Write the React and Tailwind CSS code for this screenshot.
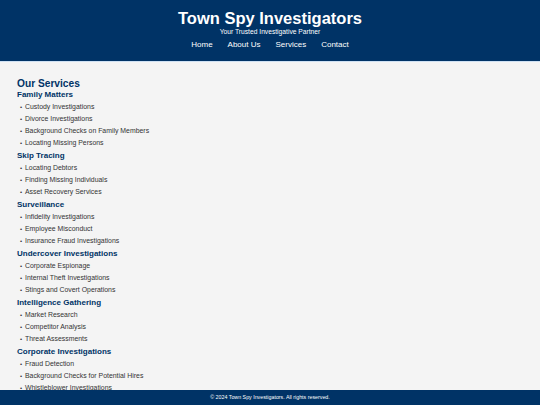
const services = [
  {
    title: "Family Matters",
    items: [
      "Custody Investigations",
      "Divorce Investigations",
      "Background Checks on Family Members",
      "Locating Missing Persons",
    ],
  },
  {
    title: "Skip Tracing",
    items: ["Locating Debtors", "Finding Missing Individuals", "Asset Recovery Services"],
  },
  {
    title: "Surveillance",
    items: ["Infidelity Investigations", "Employee Misconduct", "Insurance Fraud Investigations"],
  },
  {
    title: "Undercover Investigations",
    items: ["Corporate Espionage", "Internal Theft Investigations", "Stings and Covert Operations"],
  },
  {
    title: "Intelligence Gathering",
    items: ["Market Research", "Competitor Analysis", "Threat Assessments"],
  },
  {
    title: "Corporate Investigations",
    items: [
      "Fraud Detection",
      "Background Checks for Potential Hires",
      "Whistleblower Investigations",
    ],
  },
];

const App = () => {
  return (
    <div className="min-h-[405px] bg-[#f4f4f4] font-['Liberation_Sans',Arial,sans-serif]">
      <header className="bg-[#003366] text-white text-center h-[62px] border-b-[1.5px] border-[#cfe1f3] pt-[9px]">
        <h1 className="text-[16.5px] font-bold leading-[19px]">Town Spy Investigators</h1>
        <p className="text-[6.7px] leading-[8px]">Your Trusted Investigative Partner</p>
        <nav className="flex justify-center gap-[15px] text-[8px] leading-[10px] mt-[4px]">
          <a href="#">Home</a>
          <a href="#">About Us</a>
          <a href="#">Services</a>
          <a href="#">Contact</a>
        </nav>
      </header>

      <main className="px-[17px] pt-[16px] pb-[20px]">
        <h2 className="text-[10.2px] font-bold text-[#003366] leading-[12px]">Our Services</h2>
        {services.map((section) => (
          <section key={section.title}>
            <h3 className="text-[8px] font-bold text-[#003366] leading-[10px]">{section.title}</h3>
            <ul className="mt-[1px] mb-[2px]">
              {section.items.map((item) => (
                <li key={item} className="flex items-center h-[12px] text-[6.9px] text-[#333333]">
                  <span className="w-[8px] pl-[3px] text-[6px]">•</span>
                  {item}
                </li>
              ))}
            </ul>
          </section>
        ))}
      </main>

      <footer className="fixed bottom-0 left-0 right-0 h-[15px] bg-[#003366] text-white text-[5.3px] flex items-center justify-center">
        © 2024 Town Spy Investigators. All rights reserved.
      </footer>
    </div>
  );
};

export default App;
